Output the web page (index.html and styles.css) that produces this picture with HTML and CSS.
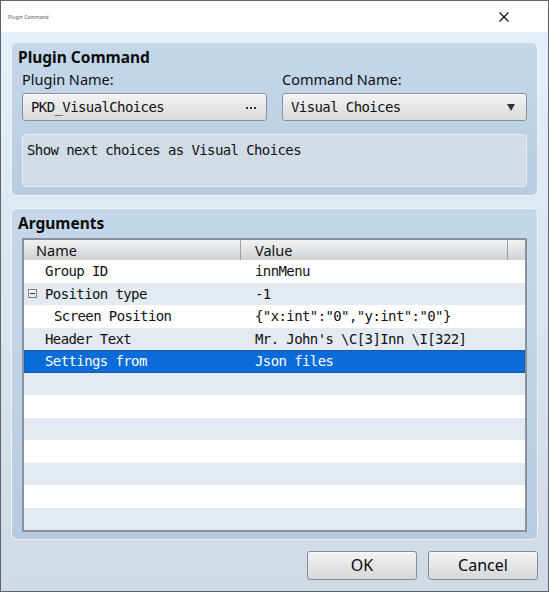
FILE: index.html
```html
<!DOCTYPE html>
<html>
<head>
<meta charset="utf-8">
<link rel="stylesheet" href="styles.css">
</head>
<body>
<div class="window">
  <div class="titlebar">
    <span class="title">Plugin Command</span>
    <svg class="close" width="10" height="10" viewBox="0 0 10 10"><path d="M0.5 0.5 L9.5 9.5 M9.5 0.5 L0.5 9.5" stroke="#000" stroke-width="1.1" fill="none"/></svg>
  </div>
  <div class="client">
    <section class="group">
      <h2 class="group-title">Plugin Command</h2>
      <div class="fields">
        <div class="field">
          <div class="label">Plugin Name:</div>
          <div class="box"><span class="mono">PKD_VisualChoices</span><span class="dots"><i></i><i></i><i></i></span></div>
        </div>
        <div class="field">
          <div class="label">Command Name:</div>
          <div class="box"><span class="mono">Visual Choices</span><span class="arrow"></span></div>
        </div>
      </div>
      <div class="desc mono">Show next choices as Visual Choices</div>
    </section>
    <section class="group group-args">
      <h2 class="group-title">Arguments</h2>
      <div class="table">
        <div class="thead">
          <div class="th th-name">Name</div>
          <div class="th th-value">Value</div>
          <div class="th th-end"></div>
        </div>
        <div class="tbody mono">
          <div class="row"><div class="cell-name"><span class="slot"></span>Group ID</div><div class="cell-value">innMenu</div></div>
          <div class="row alt"><div class="cell-name"><span class="slot"><span class="toggle"></span></span>Position type</div><div class="cell-value">-1</div></div>
          <div class="row"><div class="cell-name child"><span class="slot"></span>Screen Position</div><div class="cell-value">{"x:int":"0","y:int":"0"}</div></div>
          <div class="row alt"><div class="cell-name"><span class="slot"></span>Header Text</div><div class="cell-value">Mr. John's \C[3]Inn \I[322]</div></div>
          <div class="row selected"><div class="cell-name"><span class="slot"></span>Settings from</div><div class="cell-value">Json files</div></div>
          <div class="row alt"></div>
          <div class="row"></div>
          <div class="row alt"></div>
          <div class="row"></div>
          <div class="row alt"></div>
          <div class="row"></div>
          <div class="row alt"></div>
        </div>
      </div>
    </section>
    <div class="buttons">
      <button class="btn">OK</button>
      <button class="btn">Cancel</button>
    </div>
  </div>
</div>
</body>
</html>
```

FILE: styles.css
```css
* { box-sizing: border-box; }
html, body { margin: 0; padding: 0; }
body {
  width: 549px;
  height: 592px;
  font-family: "Noto Sans", "DejaVu Sans", sans-serif;
  color: #111;
}
.mono {
  font-family: "DejaVu Sans Mono", "Liberation Mono", monospace;
  font-size: 14px;
  letter-spacing: -0.6px;
}
.window {
  width: 549px;
  height: 592px;
  border: 1px solid #5f646b;
  display: flex;
  flex-direction: column;
  background: #fff;
}
.titlebar {
  height: 31px;
  flex: none;
  background: #fff;
  display: flex;
  align-items: center;
  justify-content: space-between;
  padding: 0 39px 0 7px;
}
.title { font-size: 5px; color: #555; line-height: 6px; }
.close { display: block; }
.client {
  flex: 1;
  background: linear-gradient(#e4effb, #cfdae6);
  padding: 10px 10px 0 10px;
}
.group {
  border: 1px solid #eef4fa;
  border-radius: 6px;
  background: linear-gradient(#c5d8eb, #b8cce1);
  padding: 4px 10px 8px 10px;
}
.group-args { margin-top: 12px; padding-bottom: 7px; }
.group-title {
  margin: 0 0 0 -10px;
  padding-left: 6px;
  font-size: 15.5px;
  font-weight: bold;
  line-height: 20px;
  color: #0d0d0d;
}
.fields {
  display: grid;
  grid-template-columns: 1fr 1fr;
  column-gap: 15px;
  margin-top: 2px;
}
.label {
  font-size: 14.5px;
  line-height: 20px;
  height: 20px;
  margin-bottom: 4px;
  color: #111;
}
.box {
  height: 28px;
  border: 1px solid #8a9097;
  border-radius: 3px;
  background: linear-gradient(#f3f3f3, #d9dadc);
  display: flex;
  align-items: center;
  justify-content: space-between;
  padding: 0 10px 0 8px;
  box-shadow: inset 0 1px 0 #fbfbfb;
}
.box .mono { color: #111; }
.dots { display: flex; gap: 2px; margin-top: 2px; }
.dots i { display: block; width: 2px; height: 2px; background: #333; }
.arrow {
  width: 0; height: 0;
  border-left: 4.5px solid transparent;
  border-right: 4.5px solid transparent;
  border-top: 7px solid #333;
  margin-right: 1px;
}
.desc {
  margin-top: 13px;
  height: 53px;
  border: 1px solid #e7edf3;
  border-radius: 4px;
  background: #d1dce7;
  padding: 7px 4px 0 4px;
  line-height: 17px;
  color: #111;
}
.table {
  margin-top: 5px;
  border: 2px solid #8b9198;
  background: #fff;
}
.thead {
  display: grid;
  grid-template-columns: 217px 1fr 17px;
  height: 21px;
  background: linear-gradient(#f1f1f1, #cfd3d7);
  border-bottom: 1px solid #9aa0a6;
}
.th {
  font-size: 14.5px;
  line-height: 21px;
  color: #111;
}
.th-name { padding-left: 12px; border-right: 1px solid #9aa0a6; }
.th-value { padding-left: 14px; border-right: 1px solid #9aa0a6; }
.tbody { display: flex; flex-direction: column; margin-top: -1px; }
.row {
  height: 22.5px;
  line-height: 22.5px;
  display: grid;
  grid-template-columns: 216px 1fr;
  background: #fff;
  color: #111;
  white-space: nowrap;
}
.row.alt { background: #e3eaf1; }
.row.selected {
  background: #0a6cd9;
  color: #fff;
  box-shadow: inset 0 0 0 1px #1b5aa6;
}
.cell-name { display: flex; align-items: center; padding-left: 4px; }
.cell-name.child { padding-left: 13px; }
.slot { width: 9px; height: 9px; margin-right: 8px; flex: none; display: block; }
.toggle {
  display: block;
  width: 9px; height: 9px;
  border: 1px solid #7d848c;
  background: linear-gradient(#fafafa, #e2e5e8);
  position: relative;
}
.toggle::after {
  content: "";
  position: absolute;
  left: 1px; right: 1px; top: 3px;
  height: 1px;
  background: #333;
}
.cell-value { padding-left: 15px; }
.buttons {
  display: flex;
  justify-content: flex-end;
  gap: 11px;
  margin-top: 11px;
}
.btn {
  width: 110px;
  height: 29px;
  border: 1px solid #878c93;
  border-radius: 3px;
  background: linear-gradient(#f4f4f4, #d5d7da);
  box-shadow: inset 0 1px 0 #fcfcfc;
  font-family: "Noto Sans", sans-serif;
  font-size: 16px;
  color: #0a0a0a;
  padding: 0;
  line-height: 27px;
}
```
